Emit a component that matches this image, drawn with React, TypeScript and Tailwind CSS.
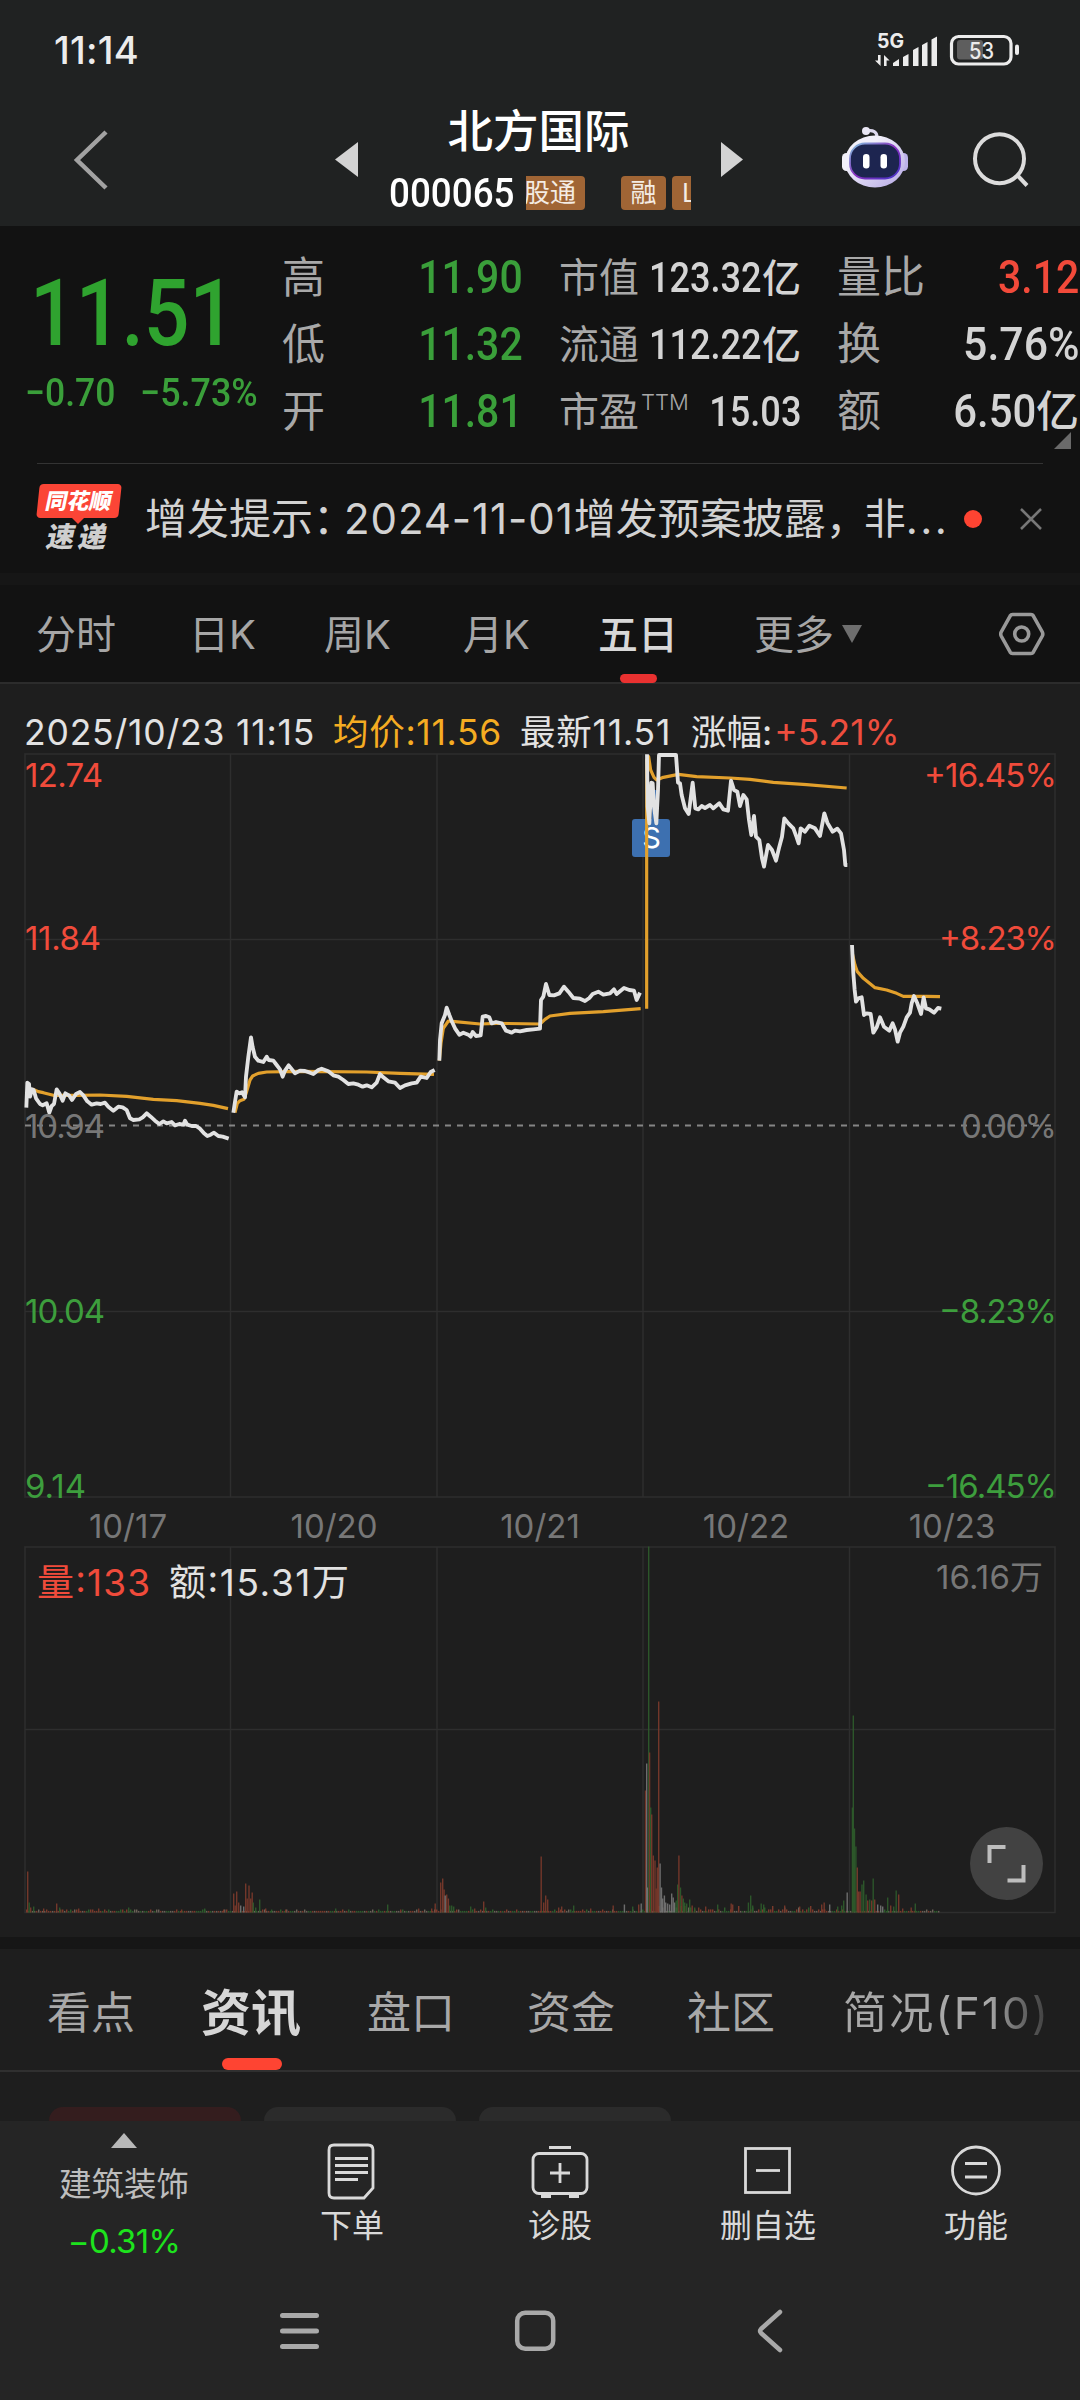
import React from 'react';
import clsx from 'clsx';

type Series = { x: number; y: number; price: string; avg: string };

// points are stored at 3x density, relative to each day's origin
const days: Series[] = [
  {
    x: 0,
    y: 960,
    price:
      '79,443 82,368 87,372 90,410 96,388 101,390 108,415 120,432 128,436 140,430 148,458 155,438 162,432 170,388 178,400 188,422 196,400 207,406 216,420 228,402 240,396 250,406 262,424 275,434 290,430 302,432 315,428 325,440 340,452 355,440 368,442 380,450 390,475 400,480 418,478 428,472 440,460 452,470 465,482 478,492 490,484 500,490 515,486 525,496 538,492 550,494 555,482 562,494 575,498 588,498 600,506 612,520 622,528 632,524 642,518 655,528 668,530 686,536',
    avg: '79,410 90,395 100,388 115,395 130,398 160,406 230,406 300,405 380,409 460,418 530,422 600,430 640,436 684,446',
  },
  {
    x: 0,
    y: 960,
    price:
      '700,458 705,425 710,395 718,400 726,397 735,412 738,350 745,290 753,232 758,262 765,290 775,302 790,306 800,290 806,300 820,302 830,315 840,328 848,350 855,332 866,316 874,326 885,340 900,332 915,333 930,338 940,342 955,330 965,326 985,334 1000,346 1015,350 1030,360 1045,372 1060,370 1075,374 1088,380 1100,376 1115,382 1130,368 1140,342 1150,352 1165,364 1185,368 1200,384 1215,376 1235,370 1250,368 1262,350 1280,354 1292,336 1304,330',
    avg: '705,458 712,430 720,422 732,418 740,395 750,360 758,348 775,340 800,336 900,334 1100,336 1200,340 1302,343',
  },
  {
    x: 430,
    y: 740,
    price:
      '28,962 30,900 35,850 45,825 50,803 58,825 66,845 75,865 88,884 100,878 115,884 122,890 128,876 138,888 152,886 158,830 168,828 178,832 185,850 198,846 215,850 228,872 245,878 255,872 270,874 290,870 310,868 330,866 333,780 340,770 348,732 358,765 372,766 388,760 402,740 415,755 430,774 450,776 465,783 478,774 488,762 505,755 520,764 540,760 552,748 560,762 582,744 598,750 612,752 620,780 630,758',
    avg: '28,962 33,910 40,865 55,843 75,845 150,852 200,850 330,852 345,838 360,828 420,820 520,815 632,806',
  },
  {
    x: 430,
    y: 740,
    price:
      '651,43 653,200 658,250 664,128 668,130 672,200 679,250 684,150 687,45 738,45 744,128 750,130 755,165 765,205 776,222 788,128 796,205 805,208 815,198 825,204 840,195 850,205 868,190 880,208 894,212 903,122 912,150 922,155 930,198 940,165 950,178 957,240 964,285 972,228 978,290 988,300 996,355 1002,380 1014,315 1026,330 1038,362 1048,320 1056,290 1063,235 1075,250 1090,265 1100,292 1106,310 1112,265 1125,275 1138,257 1155,265 1170,288 1183,220 1192,248 1208,275 1222,266 1233,280 1242,330 1246,375 1252,375',
    avg: '650,806 650,60 656,50 662,90 672,112 680,120 700,112 745,103 800,110 900,114 960,118 1030,127 1130,134 1250,144',
  },
  {
    x: 740,
    y: 740,
    price:
      '336,615 340,700 344,750 348,785 355,775 365,772 372,825 380,820 392,822 400,878 410,862 420,832 432,860 448,872 458,850 465,868 473,905 480,878 490,860 500,832 510,818 515,790 522,768 532,790 543,822 551,772 558,805 568,808 582,818 594,804 604,806',
    avg: '337,640 345,675 352,695 370,715 395,735 405,743 440,750 470,760 490,769 560,769 600,770',
  },
];

const RED = '#7c3a2b';
const GREEN = '#2d5c2b';
const GRAY = '#757575';

// [x, height, color]
const spikes: [number, number, string][] = [
  [27, 41, RED], [28.5, 10, GREEN], [30, 5, RED], [33, 6, GREEN], [43, 4, RED], [56, 9, RED], [59, 5, GREEN], [78, 4, RED],
  [98, 4, RED], [128, 5, GREEN], [181, 3, RED], [204, 4, GREEN], [223, 3, RED], [233, 19, RED], [234.5, 7, RED], [236, 21, RED],
  [238, 10, RED], [240, 7, GRAY], [243, 6, GRAY], [245, 29, RED], [246.5, 14, RED], [248.3, 27, RED], [250, 14, RED],
  [251.5, 20, RED], [252.6, 10, GREEN], [255, 5, GREEN], [259, 13, GREEN], [265, 4, RED], [271, 3, GREEN], [285, 3, RED],
  [335, 4, GREEN], [387, 8, GREEN], [400, 3, RED], [418, 4, RED], [431, 4, RED], [434.5, 9, RED], [440, 30, RED], [442, 34, RED],
  [443.4, 23, RED], [444.5, 17, GRAY], [446, 18, RED], [447.7, 14, RED], [449, 7, GREEN], [451, 7, GREEN], [453, 6, GREEN],
  [470, 6, GREEN], [474, 4, RED], [483, 11, RED], [485, 5, GREEN], [540.5, 56, RED], [543, 10, RED], [545, 17, RED], [547, 13, RED],
  [558, 5, RED], [561, 6, RED], [573, 7, GREEN], [590, 4, RED], [612.5, 7, RED], [623.7, 8, GRAY], [632, 6, GREEN], [638, 8, RED],
  [640.5, 9, GRAY], [644.8, 122, RED], [646, 149, GRAY], [647, 25, GRAY], [648, 366, GREEN], [648.9, 160, RED],
  [650, 105, GREEN], [651, 98, RED], [652.6, 57, RED], [654.3, 52, RED], [655.5, 24, RED], [656.6, 45, RED], [658, 211, RED],
  [659.4, 49, GRAY], [660.8, 25, GRAY], [662, 14, GRAY], [663.7, 17, GRAY], [665, 10, GRAY], [667, 9, GRAY], [669, 8, GRAY],
  [671, 19, GRAY], [672.5, 15, GRAY], [674, 10, GRAY], [675.5, 12, GREEN], [677, 28, GREEN], [678.2, 57, RED], [679.8, 25, GREEN],
  [681.2, 17, RED], [682.6, 14, GREEN], [684, 10, GREEN], [686, 9, GREEN], [689, 13, GREEN], [691.5, 7, RED], [694, 5, GREEN],
  [698, 5, RED], [705, 6, RED], [717, 8, GREEN], [730.5, 9, RED], [732, 8, RED], [747.7, 10, GREEN], [750, 17, GREEN],
  [752, 7, GREEN], [760.5, 9, GREEN], [763, 8, GREEN], [784, 7, RED], [799, 6, RED], [821, 8, RED], [823.5, 10, RED], [829, 8, GRAY],
  [837, 6, GREEN], [841, 7, GREEN], [843, 12, GREEN], [846.5, 20, GRAY], [851.7, 105, GREEN], [852.6, 197, GREEN], [853.8, 84, GREEN],
  [855.2, 66, GREEN], [856.6, 45, RED], [858, 21, RED], [859.4, 21, RED], [861.3, 28, GREEN], [863, 32, GREEN], [865.4, 18, GREEN],
  [867, 12, RED], [869, 13, GREEN], [871, 12, RED], [872.5, 34, GREEN], [874, 13, RED], [877, 8, GRAY], [880, 7, GRAY],
  [882, 6, GRAY], [887, 15, GREEN], [890, 7, RED], [893, 6, GREEN], [895.5, 22, GREEN], [898, 18, RED], [902, 4, RED],
  [910.5, 5, RED], [914.6, 9, GREEN],
];

const floorBars = Array.from({ length: 457 }, (_, i) => {
  const n = (i * 7919 + ((i * i) % 131) * 17) % 101;
  const near = i > 308 && i < 400 ? 2 : 0;
  return {
    x: 26 + i * 2,
    h: 1.6 + (n % 5 === 0 ? 1.4 + near : 0) + (near && n % 3 === 0 ? 1.5 : 0),
    c: n % 3 === 0 ? RED : n % 3 === 1 ? GREEN : '#6b6257',
  };
}).filter((b) => b.x < 941);

function Num({ children, className }: { children: React.ReactNode; className?: string }) {
  return <span className={clsx("inline-block whitespace-pre font-['Roboto',sans-serif]", className)}>{children}</span>;
}

function StatusBar() {
  return (
    <div className="flex h-[100px] items-center bg-[#202222] pl-[54px] pr-[57px] text-[#ececec]">
      <span className="w-[820px] text-[38px] leading-[50px] font-medium tracking-[0.2px]">11:14</span>
      <svg className="h-[34px] w-[66px]" viewBox="0 0 66 34">
        <text x="3" y="15" fontSize="20" fontWeight="700" fill="#ececec" textLength="27" lengthAdjust="spacingAndGlyphs">5G</text>
        <g fill="#ececec">
          <path d="M4 22h2.600v11L1 27.500h3zM10 33V22l5.600 5.500h-3V33z" />
          <path d="M19 33v-3l6-4v7zM29 33v-9l5.500-3v12zM39 33V17l5.500-3v19zM48 33V12l5.500-3v24zM57.500 33V6.500l5.500-3V33z" />
        </g>
      </svg>
      <svg className="ml-[9px] h-[34px] w-[72px]" viewBox="0 0 72 34">
        <rect x="8" y="7" width="26" height="19.500" rx="3" fill="#5e5e5e" />
        <rect x="2.500" y="3.500" width="59.500" height="27.500" rx="7" fill="none" stroke="#ececec" strokeWidth="3.200" />
        <rect x="66" y="11.500" width="4" height="10.500" rx="2" fill="#ececec" />
        <text x="20" y="25.500" fontSize="22.500" fontWeight="500" fill="#ececec" textLength="25" lengthAdjust="spacingAndGlyphs">53</text>
      </svg>
    </div>
  );
}

function Robot() {
  return (
    <svg className="mt-[26px] ml-[98px] h-[64px] w-[68px]" viewBox="0 0 68 64">
      <defs>
        <linearGradient id="shell" x1="0" y1="0" x2="1" y2="1">
          <stop offset="0.3" stopColor="#f1effa" />
          <stop offset="1" stopColor="#b3a6e4" />
        </linearGradient>
        <linearGradient id="rim" x1="0" y1="0" x2="1" y2="1">
          <stop offset="0" stopColor="#7fc4dd" />
          <stop offset="0.5" stopColor="#8a2fc0" />
          <stop offset="1" stopColor="#4334c8" />
        </linearGradient>
      </defs>
      <path d="M36 11C36 6 32 3.500 26 5" fill="none" stroke="#dcd8ee" strokeWidth="3.200" />
      <circle cx="25" cy="5" r="4" fill="#e9e7f5" />
      <rect x="1" y="27" width="9" height="18" rx="4.500" fill="#f1f0f8" />
      <rect x="58" y="27" width="9" height="18" rx="4.500" fill="#bcb2ea" />
      <ellipse cx="34" cy="35.500" rx="30" ry="26" fill="url(#shell)" />
      <rect x="9" y="17.500" width="50" height="35" rx="15" fill="#1d2550" stroke="url(#rim)" strokeWidth="1.800" />
      <rect x="22" y="28" width="6.500" height="14.500" rx="3.200" fill="#fff" />
      <rect x="39.500" y="28" width="6.500" height="14.500" rx="3.200" fill="#fff" />
    </svg>
  );
}

function Header() {
  const tag = 'flex h-[34px] items-center bg-[#a06535] text-[26px] leading-[34px] text-[#f4ece4]';
  return (
    <div className="flex h-[126px] items-start bg-[#202222]">
      <svg className="mt-[30px] ml-[72px] h-[60px] w-[38px]" viewBox="0 0 38 60" fill="none" stroke="#a2a2a2" strokeWidth="4.500">
        <path d="M34 2L5 30l29 28" />
      </svg>
      <svg className="mt-[42px] ml-[225px] h-[35px] w-[23px]" viewBox="0 0 23 35">
        <path d="M23 0v35L0 17.500z" fill="#d3d3d3" />
      </svg>
      <div className="ml-[31px] flex w-[302px] flex-col">
        <div className="mt-[7px] pr-[3px] text-center text-[45.500px] leading-[50px] font-medium text-white">北方国际</div>
        <div className="mt-[18px] flex h-[36px] items-center">
          <Num className="mt-[2px] w-[137px] origin-left scale-x-[0.92] text-[40px] leading-[36px] font-medium text-white">000065</Num>
          <div className="flex w-[165px] overflow-hidden">
            <div className={clsx(tag, 'w-[59px] shrink-0 justify-end rounded-r-[4px] pr-[9px]')}>
              <span className="whitespace-nowrap">股通</span>
            </div>
            <div className={clsx(tag, 'ml-[36px] w-[45px] shrink-0 justify-center rounded-[4px]')}>融</div>
            <div className={clsx(tag, 'ml-[6px] w-[30px] shrink-0 rounded-l-[4px] pl-[10px]')}>L</div>
          </div>
        </div>
      </div>
      <svg className="mt-[42px] ml-[30px] h-[35px] w-[22px]" viewBox="0 0 22 35">
        <path d="M0 0v35l22-17.500z" fill="#d3d3d3" />
      </svg>
      <Robot />
      <svg className="mt-[30px] ml-[63px] h-[60px] w-[60px]" viewBox="0 0 60 60" fill="none" stroke="#dcdcdc" strokeWidth="4">
        <circle cx="27.500" cy="28.700" r="24.500" />
        <path d="M45 45l10 10.500" />
      </svg>
    </div>
  );
}

const highs = [
  ['高', '11.90'],
  ['低', '11.32'],
  ['开', '11.81'],
];

const caps = [
  { label: '市值', value: '123.32', unit: '亿' },
  { label: '流通', value: '112.22', unit: '亿' },
  { label: '市盈', sup: 'TTM', value: '15.03' },
];

const ratios = [
  { label: '量比', value: '3.12', color: 'text-[#f24a3a]', scale: 'scale-x-[0.88]' },
  { label: '换', value: '5.76%', color: 'text-[#d4d4d4]', scale: 'scale-x-[0.92]' },
  { label: '额', value: '6.50', unit: '亿', color: 'text-[#d4d4d4]', scale: 'scale-x-[0.9]' },
];

function Quote() {
  return (
    <div className="flex h-[237px] items-start pt-[18px] text-[#a8a8a8]">
      <div className="w-[282px]">
        <Num className="mt-[24px] ml-[30px] origin-left scale-x-[0.874] text-[92px] leading-[92px] font-medium text-[#2fa32f]">11.51</Num>
        <div className="mt-[13px] ml-[25px] flex text-[39px] leading-[40px] font-medium text-[#3a9f3a]">
          <Num className="w-[115px] origin-left scale-x-[0.91]">−0.70</Num>
          <Num className="origin-left scale-x-[0.92]">−5.73%</Num>
        </div>
      </div>
      <div className="w-[241px]">
        {highs.map(([label, value]) => (
          <div key={label} className="flex h-[67px] items-center justify-between leading-[67px]">
            <span className="text-[43px]">{label}</span>
            <Num className="origin-right scale-x-[0.88] text-[46.500px] font-medium text-[#3a9f3a]">{value}</Num>
          </div>
        ))}
      </div>
      <div className="ml-[36px] w-[242px]">
        {caps.map((c) => (
          <div key={c.label} className="flex h-[67px] items-center leading-[67px] whitespace-nowrap">
            <span className="shrink-0 text-[40px]">{c.label}</span>
            {c.sup && <span className="mb-[18px] ml-[2px] text-[22px] font-light">{c.sup}</span>}
            <span className="flex min-w-0 flex-1 items-center justify-end text-[#d4d4d4]">
              <Num className="origin-right scale-x-[0.85] text-[42.500px] font-medium">{c.value}</Num>
              {c.unit && <span className="text-[39px] font-medium">{c.unit}</span>}
            </span>
          </div>
        ))}
      </div>
      <div className="relative ml-[36px] w-[242px]">
        {ratios.map((r) => (
          <div key={r.label} className="flex h-[67px] items-center justify-between leading-[67px]">
            <span className="text-[44px]">{r.label}</span>
            <span className={clsx('flex items-center', r.color)}>
              <Num className={clsx('origin-right text-[46.500px] font-medium', r.scale)}>{r.value}</Num>
              {r.unit && <span className="text-[43px] font-medium">{r.unit}</span>}
            </span>
          </div>
        ))}
        <svg className="absolute top-[188px] right-[8px] h-[17px] w-[17px]" viewBox="0 0 17 17">
          <path d="M17 0v17H0z" fill="#6a6a6a" />
        </svg>
      </div>
    </div>
  );
}

function NewsBar() {
  return (
    <div className="flex h-[109px] items-center">
      <div className="mt-[-2px] ml-[38px] w-[82px]">
        <div className="flex h-[34px] -skew-x-6 items-center justify-center rounded-[4px] bg-[#fb4536]">
          <span className="-skew-x-6 text-[22px] leading-[34px] font-black text-white">同花顺</span>
        </div>
        <svg className="ml-[34px] h-[6px] w-[12px]" viewBox="0 0 12 6">
          <path d="M0 0h12L6 6z" fill="#fb4536" />
        </svg>
        <div className="flex h-[27px] -skew-x-12 items-center justify-between pr-[13px] pl-[9px] text-[28px] leading-[27px] font-black text-[#cfcfcf]">
          <span>速</span>
          <span>递</span>
        </div>
      </div>
      <span className="ml-[25px] w-[800px] overflow-hidden text-[42px] leading-[60px] whitespace-nowrap text-[#d2d2d2]">
        增发提示<span className="-mr-[11px]">：</span>
        <span className="tracking-[0.900px]">2024-11-01</span>增发预案披露<span className="-mr-[4px]">，</span>非
        <span className="tracking-[2.500px]">...</span>
      </span>
      <span className="ml-[19px] h-[18px] w-[18px] rounded-full bg-[#fe4432]" />
      <svg className="ml-[37px] h-[24px] w-[24px]" viewBox="0 0 24 24" stroke="#777" strokeWidth="2.500">
        <path d="M2 2l20 20M22 2L2 22" />
      </svg>
    </div>
  );
}

function PeriodTabs() {
  return (
    <div className="flex h-[99px] items-start border-b-2 border-[#2c2c2c] bg-[#121212] pt-[25px] text-[40px] leading-[50px] text-[#a6a6a6]">
      <span className="ml-[36px] w-[153px]">分时</span>
      <span className="w-[135px]">日K</span>
      <span className="w-[139px]">周K</span>
      <span className="w-[135px]">月K</span>
      <div className="flex w-[156px] flex-col">
        <span className="font-medium text-[#d8d8d8]">五日</span>
        <span className="mt-[14px] ml-[22px] h-[9px] w-[37px] rounded-[5px] bg-[#e93130]" />
      </div>
      <span className="w-[88px]">更多</span>
      <svg className="mt-[15px] h-[18px] w-[20px]" viewBox="0 0 20 18">
        <path d="M0 0h20L10 18z" fill="#6e6e6e" />
      </svg>
      <svg className="mt-[2px] ml-[137px] h-[44px] w-[46px]" viewBox="0 0 46 44" fill="none" stroke="#999" strokeWidth="3.600">
        <path d="M13.500 2.500h18.500q1.500 0 2.300 1.300l9 16.200q1 2 0 4l-9 16.200q-.8 1.300-2.300 1.300H13.500q-1.500 0-2.300-1.300l-9-16.200q-1-2 0-4l9-16.200q.8-1.300 2.300-1.300z" />
        <circle cx="22.700" cy="22" r="7" />
      </svg>
    </div>
  );
}

const dates = ['10/17', '10/20', '10/21', '10/22', '10/23'];
const columns = [25, 230.5, 437, 643, 849.5, 1055];

function Charts() {
  return (
    <svg className="block h-[1187px] w-[1080px]" viewBox="0 750 1080 1187">
      <g stroke="#2e2e2e" strokeWidth="1.500" fill="none">
        <rect x="25" y="754" width="1030" height="743" />
        <rect x="25" y="1547" width="1030" height="365.500" />
        {columns.slice(1, 5).map((x) => (
          <path key={x} d={`M${x} 754V1497M${x} 1547V1912`} />
        ))}
        <path d="M25 939.500H1055M25 1311.500H1055M25 1729.500H1055" />
      </g>
      <path d="M25 1125.500H1055" stroke="#858585" strokeWidth="2" strokeDasharray="6 6" />

      <rect x="632" y="819" width="38" height="38" rx="3" fill="#3d70b0" />
      <path d="M653 819L655 790" stroke="#3d70b0" strokeWidth="3" />
      <text x="651.500" y="848" fontSize="29" textAnchor="middle" fill="#fff">S</text>

      {days.map((d, i) => (
        <g key={i} transform={`translate(${d.x} ${d.y}) scale(.33333)`} fill="none" strokeLinejoin="round">
          <polyline points={d.avg} stroke="#e2a02c" strokeWidth="9.500" />
          <polyline points={d.price} stroke="#e2e2e2" strokeWidth="11.500" />
        </g>
      ))}

      <g fontSize="33">
        <g fill="#f04b3b">
          <text x="25" y="787" textLength="78">12.74</text>
          <text x="25" y="950" textLength="76">11.84</text>
          <text x="924" y="787" textLength="133">+16.45%</text>
          <text x="939" y="950" textLength="118">+8.23%</text>
        </g>
        <g fill="#777">
          <text x="25" y="1138" textLength="80">10.94</text>
          <text x="961" y="1138" textLength="96">0.00%</text>
          {dates.map((d, i) => (
            <text key={d} x={25 + 206 * i + 103} y="1538" textAnchor="middle">{d}</text>
          ))}
          <text x="936" y="1589" textLength="107">16.16万</text>
        </g>
        <g fill="#3d9e3d">
          <text x="25" y="1323" textLength="80">10.04</text>
          <text x="25" y="1498" textLength="61">9.14</text>
          <text x="939" y="1323" textLength="118">−8.23%</text>
          <text x="925" y="1498" textLength="132">−16.45%</text>
        </g>
      </g>
      <g fontSize="37">
        <text x="37" y="1596" fill="#f04b3b" textLength="113">量:133</text>
        <text x="169" y="1596" fill="#e2e2e2" textLength="180">额:15.31万</text>
      </g>

      {floorBars.map((b) => (
        <rect key={b.x} x={b.x} y={1912.5 - b.h} width="1.400" height={b.h} fill={b.c} />
      ))}
      {spikes.map(([x, h, c]) => (
        <rect key={x} x={x} y={1912.5 - h} width="1.400" height={h} fill={c} opacity="0.9" />
      ))}

      <circle cx="1006.500" cy="1863.500" r="36.500" fill="#424242" />
      <path d="M989.500 1863v-16h16M1023.500 1865v15.500h-16" fill="none" stroke="#bdbdbd" strokeWidth="4" />
    </svg>
  );
}

function ChartPanel() {
  return (
    <div className="h-[1253px] bg-[#1e1e1e]">
      <div className="flex h-[66px] items-start pt-[24px] pl-[24px] text-[35.500px] leading-[50px] whitespace-nowrap text-[#e2e2e2]">
        <span className="w-[309px] tracking-[0.800px]">2025/10/23 11:15</span>
        <span className="w-[187px] tracking-[0.700px] text-[#f5ac22]">均价:11.56</span>
        <span className="w-[171px] tracking-[0.800px]">最新11.51</span>
        <span>涨幅:</span>
        <span className="ml-[2px] text-[#ee4e3e]">+5.21%</span>
      </div>
      <Charts />
    </div>
  );
}

function InfoTabs() {
  return (
    <div className="h-[172px] overflow-hidden bg-[#1e1e1e]">
      <div className="flex h-[123px] items-start border-b-2 border-[#303030] pt-[34px] text-[44px] leading-[60px] whitespace-nowrap text-[#a8a8a8]">
        <span className="ml-[47px] w-[154px]">看点</span>
        <div className="flex w-[166px] flex-col">
          <span className="text-[50px] font-bold text-[#d6d6d6]">资讯</span>
          <span className="mt-[15px] ml-[21px] h-[12px] w-[60px] rounded-[6px] bg-[#fe4432]" />
        </div>
        <span className="w-[160px]">盘口</span>
        <span className="w-[160px]">资金</span>
        <span className="w-[156px]">社区</span>
        <span className="bg-linear-to-r from-[#a8a8a8] from-70% to-[#3a3a3a] bg-clip-text tracking-[2.200px] text-transparent">简况(F10)</span>
      </div>
      <div className="mt-[35px] ml-[49px] flex gap-[23px]">
        <div className="h-[56px] w-[192px] rounded-[14px] bg-[#341d1e]" />
        <div className="h-[56px] w-[192px] rounded-[14px] bg-[#2b2b2b]" />
        <div className="h-[56px] w-[192px] rounded-[14px] bg-[#2b2b2b]" />
      </div>
    </div>
  );
}

const actions = [
  {
    label: '下单',
    icon: (
      <>
        <path d="M12 4h34q5 0 5 5v38l-9 10H12q-5 0-5-5V9q0-5 5-5z" />
        <path d="M13 17.500h33M13 24.500h33M13 31.500h33M13 38.500h23" />
      </>
    ),
  },
  {
    label: '诊股',
    icon: (
      <>
        <rect x="3" y="12.500" width="54" height="40" rx="6" />
        <path d="M19 6.500h22M11 55.500h10M39 55.500h10M30 22v20M20 32h20" />
      </>
    ),
  },
  {
    label: '删自选',
    icon: (
      <>
        <rect x="7.500" y="7.500" width="44" height="44" />
        <path d="M18 29.500h24" />
      </>
    ),
  },
  {
    label: '功能',
    icon: (
      <>
        <circle cx="30" cy="29.500" r="23.500" />
        <path d="M19 22.500h22M19 36h22" />
      </>
    ),
  },
];

function BottomBar() {
  return (
    <div className="h-[279px] bg-[#252525]">
      <div className="flex h-[153px] items-start">
        <div className="flex w-[248px] flex-col items-center pt-[12px]">
          <svg className="h-[15px] w-[26px]" viewBox="0 0 26 15">
            <path d="M13 0l13 15H0z" fill="#b8b8b8" />
          </svg>
          <span className="mt-[16px] text-[32.500px] leading-[42px] text-[#bdbdbd]">建筑装饰</span>
          <span className="mt-[14px] text-[33px] leading-[42px] tracking-[-0.700px] text-[#1de31d]">−0.31%</span>
        </div>
        {actions.map((a) => (
          <div key={a.label} className="flex w-[208px] flex-col items-center pt-[20px]">
            <svg className="h-[60px] w-[60px]" viewBox="0 0 60 60" fill="none" stroke="#d9d9d9" strokeWidth="2.800">
              {a.icon}
            </svg>
            <span className="mt-[4px] text-[32px] leading-[42px] text-[#d9d9d9]">{a.label}</span>
          </div>
        ))}
      </div>
      <div className="flex h-[114px] items-center text-[#a9a9a9]">
        <svg className="ml-[279px] h-[44px] w-[42px]" viewBox="0 0 42 44" stroke="currentColor" strokeWidth="5" strokeLinecap="round">
          <path d="M3.500 6.500h34M3.500 22h34M3.500 37.500h34" />
        </svg>
        <svg className="ml-[193px] h-[44px] w-[42px]" viewBox="0 0 42 44" fill="none" stroke="currentColor" strokeWidth="4.500">
          <rect x="3.200" y="3.700" width="36" height="36" rx="8" />
        </svg>
        <svg className="ml-[197px] h-[44px] w-[32px]" viewBox="0 0 32 44" fill="none" stroke="currentColor" strokeWidth="4.500" strokeLinecap="round">
          <path d="M27 3L8 20q-2 2 0 4l19 17" />
        </svg>
      </div>
    </div>
  );
}

export default function App() {
  return (
    <div className="h-[2400px] w-[1080px] overflow-hidden bg-[#161616] font-['Inter','Noto_Sans_CJK_SC',sans-serif]">
      <StatusBar />
      <Header />
      <div className="h-[347px] bg-[#121212]">
        <Quote />
        <div className="mr-[37px] ml-[37px] h-px bg-[#333]" />
        <NewsBar />
      </div>
      <div className="h-[12px]" />
      <PeriodTabs />
      <ChartPanel />
      <div className="h-[12px]" />
      <InfoTabs />
      <BottomBar />
    </div>
  );
}
